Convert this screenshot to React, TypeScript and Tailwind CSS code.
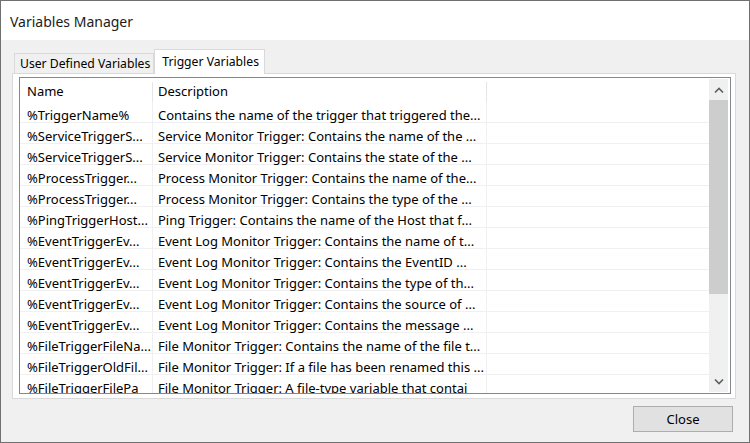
import React from "react";

const rows: [string, string][] = [
  ["%TriggerName%", "Contains the name of the trigger that triggered the..."],
  ["%ServiceTriggerS...", "Service Monitor Trigger: Contains the name of the ..."],
  ["%ServiceTriggerS...", "Service Monitor Trigger: Contains the state of the ..."],
  ["%ProcessTrigger...", "Process Monitor Trigger: Contains the name of the..."],
  ["%ProcessTrigger...", "Process Monitor Trigger: Contains the type of the ..."],
  ["%PingTriggerHost...", "Ping Trigger: Contains the name of the Host that f..."],
  ["%EventTriggerEv...", "Event Log Monitor Trigger: Contains the name of t..."],
  ["%EventTriggerEv...", "Event Log Monitor Trigger: Contains the EventID ..."],
  ["%EventTriggerEv...", "Event Log Monitor Trigger: Contains the type of th..."],
  ["%EventTriggerEv...", "Event Log Monitor Trigger: Contains the source of ..."],
  ["%EventTriggerEv...", "Event Log Monitor Trigger: Contains the message ..."],
  ["%FileTriggerFileNa...", "File Monitor Trigger: Contains the name of the file t..."],
  ["%FileTriggerOldFil...", "File Monitor Trigger: If a file has been renamed this ..."],
  ["%FileTriggerFilePa", "File Monitor Trigger: A file-type variable that contai"],
];

function Chevron({ down }: { down?: boolean }) {
  return (
    <svg width="10" height="6" viewBox="0 0 10 6" className={down ? "rotate-180" : ""}>
      <path d="M1 5.5 L5 1.5 L9 5.5" fill="none" stroke="#606060" strokeWidth="1.6" />
    </svg>
  );
}

export default function App() {
  return (
    <div
      className="w-[750px] h-[443px] overflow-hidden border border-[#707070] bg-[#f0f0f0] flex flex-col text-[13px] text-black"
      style={{ fontFamily: '"Noto Sans", "Open Sans", sans-serif' }}
    >
      {/* title bar */}
      <div className="h-[39px] shrink-0 bg-white flex items-center pl-[9px] pt-px text-[14px] text-[#1b1b1b]">
        Variables Manager
      </div>

      <div className="flex-1 flex flex-col pl-[11px] pr-[13px] pt-[9px]">
        {/* tabs */}
        <div className="flex items-end h-[24px] pl-[2px] relative z-10 text-[12.2px]">
          <div className="h-[20px] pl-[5px] pr-[3px] pt-[2px] border border-b-0 border-[#d9d9d9] bg-[#f0f0f0] flex items-center leading-none">
            User Defined Variables
          </div>
          <div className="h-[25px] -mb-px pl-[7px] pr-[5px] border border-b-0 border-[#d9d9d9] bg-white flex items-center leading-none">
            Trigger Variables
          </div>
        </div>

        {/* tab panel */}
        <div className="h-[326px] border border-[#d9d9d9] bg-white pl-[6px] pr-[4px] pt-[3px] pb-[4px] flex">
          <div className="flex-1 border border-[#828790] flex overflow-hidden">
            {/* list */}
            <div className="flex-1 flex flex-col overflow-hidden">
              <div className="h-[24px] shrink-0 flex items-stretch pt-[4px]">
                <div className="w-[133px] pl-[7px] border-r border-[#e5e5e5] flex items-center">Name</div>
                <div className="w-[334px] pl-[5px] border-r border-[#e5e5e5] flex items-center">Description</div>
                <div className="flex-1" />
              </div>
              {rows.map(([name, desc], i) => (
                <div key={i} className="h-[21px] shrink-0 flex items-stretch border-b border-[#f0f0f0] whitespace-nowrap">
                  <div className="w-[133px] pl-[7px] pt-[4px] leading-[18px] border-r border-[#f0f0f0]">{name}</div>
                  <div className="w-[334px] pl-[5px] pt-[4px] leading-[18px] border-r border-[#f0f0f0]">{desc}</div>
                  <div className="flex-1" />
                </div>
              ))}
            </div>
            {/* scrollbar */}
            <div className="w-[19px] mr-[2px] my-px bg-[#f0f0f0] flex flex-col">
              <div className="h-[21px] flex items-center justify-center">
                <Chevron />
              </div>
              <div className="h-[194px] bg-[#cdcdcd]" />
              <div className="flex-1" />
              <div className="h-[21px] flex items-center justify-center">
                <Chevron down />
              </div>
            </div>
          </div>
        </div>

        {/* footer */}
        <div className="flex justify-end pt-[7px] pr-[3px]">
          <button className="w-[100px] h-[26px] bg-[#e1e1e1] border border-[#adadad] text-[13px] pt-px">
            Close
          </button>
        </div>
      </div>
    </div>
  );
}
